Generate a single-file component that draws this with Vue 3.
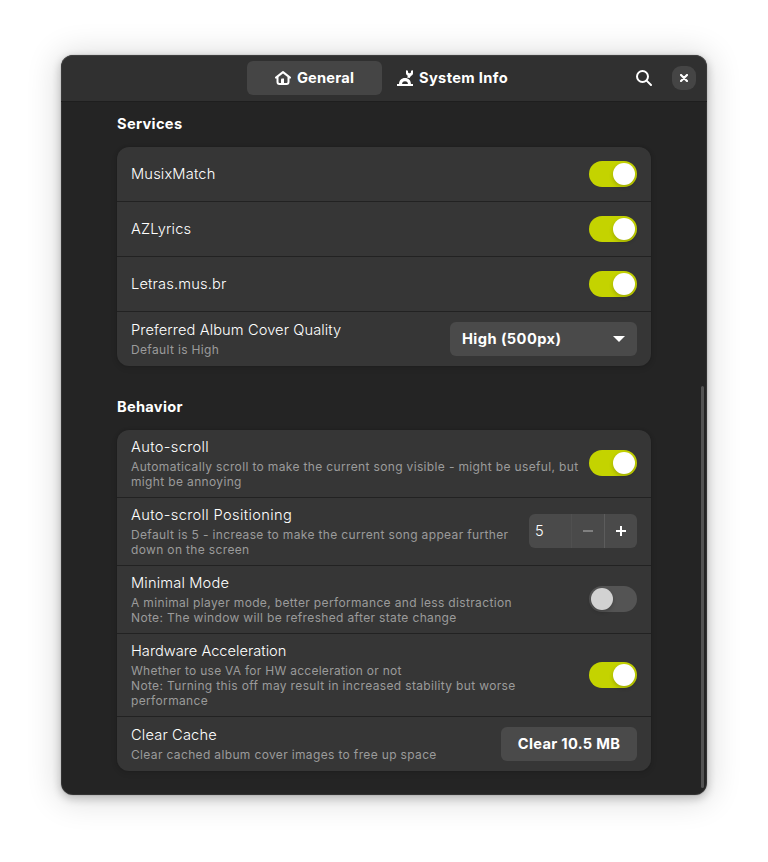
<script setup>
import { ref } from 'vue'

const services = ref([
  { title: 'MusixMatch', on: true },
  { title: 'AZLyrics', on: true },
  { title: 'Letras.mus.br', on: true },
])
const steps = ref(5)
</script>

<template>
  <main class="desktop">
    <div class="window">
      <header class="bar">
        <nav class="tabs">
          <button class="tab active">
            <svg width="16" height="16" viewBox="0 0 16 16" fill="none" stroke="currentColor" stroke-width="2">
              <path d="M1 7.6 L8 2.1 L15 7.6" stroke-linecap="round" stroke-linejoin="round" />
              <path d="M2.5 7 V12 Q2.5 14 4.5 14 H11.5 Q13.5 14 13.5 12 V7" />
              <path d="M6 14 V9.5 Q6 8.5 7 8.5 H9 V14 Z" fill="currentColor" stroke="none" />
            </svg>
            <span>General</span>
          </button>
          <button class="tab">
            <svg width="16" height="16" viewBox="0 0 16 16" fill="currentColor">
              <path d="M0 14 H16 V16 H0 Z" />
              <path d="M2 14.5 C2 10.3 4.4 8 8 8 C11.6 8 14 10.3 14 14.5 H11 C11 12.4 10 11.2 8 11.2 C6 11.2 5 12.4 5 14.5 Z" />
              <path d="M9 0.2 L11 0.8 V2.4 L12 3.2 H13 L14 2.4 V0.8 L16 0.2 V3.2 C16 4.6 15 5.5 13.9 5.9 L12.6 8 L10 7.6 L11 5.8 C9.8 5.3 9 4.4 9 3.2 Z" />
            </svg>
            <span>System Info</span>
          </button>
        </nav>
        <button class="search" aria-label="Search">
          <svg width="16" height="16" viewBox="0 0 16 16" fill="none" stroke="currentColor" stroke-width="2">
            <circle cx="6.5" cy="6.5" r="5.5" />
            <path d="M10.6 10.6 L15 15" stroke-linecap="round" />
          </svg>
        </button>
        <button class="close" aria-label="Close">
          <svg width="8" height="8" viewBox="0 0 8 8" fill="none" stroke="currentColor" stroke-width="2.2">
            <path d="M1 1 L7 7 M7 1 L1 7" stroke-linecap="round" />
          </svg>
        </button>
      </header>

      <div class="content">
        <h2>Services</h2>
        <section class="card">
          <div v-for="s in services" :key="s.title" class="row">
            <div><p class="title">{{ s.title }}</p></div>
            <button class="switch" :class="{ on: s.on }" @click="s.on = !s.on"><i></i></button>
          </div>
          <div class="row">
            <div class="label">
              <p class="title snug">Preferred Album Cover Quality</p>
              <p class="sub">Default is High</p>
            </div>
            <button class="dropdown">
              <span>High (500px)</span>
              <svg width="12" height="6" viewBox="0 0 12 6" fill="currentColor"><path d="M0 0 H12 L6 6 Z" /></svg>
            </button>
          </div>
        </section>

        <h2 class="second">Behavior</h2>
        <section class="card">
          <div class="row two">
            <div>
              <p class="title wide">Auto-scroll</p>
              <p class="sub">Automatically scroll to make the current song visible - might be useful, but<br>might be annoying</p>
            </div>
            <button class="switch on"><i></i></button>
          </div>
          <div class="row two">
            <div>
              <p class="title wide">Auto-scroll Positioning</p>
              <p class="sub">Default is 5 - increase to make the current song appear further<br>down on the screen</p>
            </div>
            <div class="spin">
              <span class="value">{{ steps }}</span>
              <button class="minus" aria-label="Decrease" @click="steps--">
                <svg width="10" height="10" viewBox="0 0 10 10" fill="currentColor"><path d="M0 4 H10 V6 H0 Z" /></svg>
              </button>
              <button class="plus" aria-label="Increase" @click="steps++">
                <svg width="10" height="10" viewBox="0 0 10 10" fill="currentColor"><path d="M0 4 H10 V6 H0 Z M4 0 H6 V10 H4 Z" /></svg>
              </button>
            </div>
          </div>
          <div class="row two">
            <div>
              <p class="title">Minimal Mode</p>
              <p class="sub">A minimal player mode, better performance and less distraction<br>Note: The window will be refreshed after state change</p>
            </div>
            <button class="switch"><i></i></button>
          </div>
          <div class="row three">
            <div class="label">
              <p class="title tight">Hardware Acceleration</p>
              <p class="sub"><span class="dense">Whether to use VA for HW acceleration or not</span><br>Note: Turning this off may result in increased stability but worse<br>performance</p>
            </div>
            <button class="switch on"><i></i></button>
          </div>
          <div class="row">
            <div class="label">
              <p class="title">Clear Cache</p>
              <p class="sub">Clear cached album cover images to free up space</p>
            </div>
            <button class="clear">Clear 10.5 MB</button>
          </div>
        </section>
        <div class="scrollbar"></div>
      </div>
    </div>
  </main>
</template>

<style>
body {
  margin: 0;
  background: #fff;
}
</style>

<style scoped>
* {
  box-sizing: border-box;
}
.desktop {
  height: 862px;
  padding: 55px 61px 67px;
  overflow: hidden;
  font-family: Inter, "Liberation Sans", sans-serif;
  font-size: 14.67px;
  color: #fff;
}
.window {
  height: 740px;
  border-radius: 12px;
  background: #242424;
  box-shadow: 0 3px 9px 1px rgba(0, 0, 0, 0.2), 0 2px 32px 4px rgba(0, 0, 0, 0.14), 0 0 0 1px rgba(0, 0, 0, 0.05), inset 0 0 0 1px rgba(255, 255, 255, 0.07);
}
button {
  display: flex;
  align-items: center;
  margin: 0;
  padding: 0;
  border: 0;
  background: none;
  color: inherit;
  font: inherit;
}
.bar {
  display: grid;
  grid-template-columns: 186px 1fr 36px 35px;
  align-items: center;
  height: 47px;
  border-radius: 12px 12px 0 0;
  background: #303030;
  border-bottom: 1px solid #1e1e1e;
  box-shadow: inset 0 1px 0 rgba(255, 255, 255, 0.07), inset 1px 0 0 rgba(255, 255, 255, 0.05), inset -1px 0 0 rgba(255, 255, 255, 0.05);
}
.tabs {
  grid-column: 2;
  display: flex;
  gap: 3px;
}
.tab {
  width: 135px;
  height: 34px;
  justify-content: center;
  gap: 6px;
  border-radius: 6px;
  font-weight: 700;
  letter-spacing: 0.36px;
}
.tab.active {
  background: #454545;
  letter-spacing: 0.2px;
}
.tab span {
  white-space: nowrap;
}
.search {
  height: 34px;
}
.close {
  width: 24px;
  height: 24px;
  justify-content: center;
  border-radius: 9px;
  background: #454545;
}
.content {
  position: relative;
  height: 693px;
  padding: 12px 56px 0;
}
h2 {
  margin: 0 0 12px;
  height: 21px;
  line-height: 21px;
  font-size: 14.67px;
  font-weight: 700;
  letter-spacing: 0.32px;
}
.second {
  margin-top: 31px;
  letter-spacing: 0.26px;
}
.card {
  border-radius: 12px;
  background: #363636;
  box-shadow: 0 0 0 1px rgba(0, 0, 0, 0.03), 0 1px 3px 1px rgba(0, 0, 0, 0.07), 0 2px 6px 2px rgba(0, 0, 0, 0.03);
}
.row {
  display: flex;
  align-items: center;
  justify-content: space-between;
  height: 55px;
  padding: 0 14px;
  border-bottom: 1px solid #222;
}
.row:last-child {
  height: 54px;
  border-bottom: 0;
}
.two {
  height: 68px;
  padding-bottom: 1px;
}
.three {
  height: 83px;
}
.label {
  margin-bottom: 1px;
}
p {
  margin: 0;
  white-space: nowrap;
}
.title {
  line-height: 20px;
  font-weight: 350;
  letter-spacing: 0.15px;
}
.title.wide {
  letter-spacing: 0.34px;
}
.title.snug {
  letter-spacing: 0.09px;
}
.title.tight {
  letter-spacing: 0;
}
.sub {
  margin-top: 2px;
  font-size: 12px;
  line-height: 15px;
  letter-spacing: 0.35px;
  color: #9b9b9b;
}
.dense {
  letter-spacing: 0.27px;
}
.switch {
  flex: none;
  width: 48px;
  height: 26px;
  padding: 2px;
  border-radius: 13px;
  background: #545454;
}
.switch i {
  width: 22px;
  height: 22px;
  border-radius: 50%;
  background: #d2d2d2;
  box-shadow: 0 2px 4px rgba(0, 0, 0, 0.2);
}
.switch.on {
  justify-content: flex-end;
  background: #c4d300;
}
.switch.on i {
  background: #fff;
}
.dropdown {
  width: 187px;
  height: 34px;
  justify-content: space-between;
  padding: 0 12px;
  border-radius: 6px;
  background: #4a4a4a;
  font-weight: 700;
  letter-spacing: 0.42px;
}
.spin {
  display: flex;
  width: 108px;
  height: 34px;
  border-radius: 6px;
  background: #4a4a4a;
  line-height: 34px;
}
.value {
  width: 42px;
  padding-left: 6px;
  font-weight: 350;
}
.minus,
.plus {
  width: 33px;
  justify-content: center;
  border-left: 1px solid #505050;
}
.minus {
  color: #808080;
}
.plus {
  border-left-color: #5c5c5c;
}
.clear {
  width: 136px;
  height: 34px;
  justify-content: center;
  border-radius: 6px;
  background: #4a4a4a;
  font-weight: 700;
  letter-spacing: 0.3px;
}
.scrollbar {
  position: absolute;
  top: 284px;
  right: 3px;
  width: 3px;
  height: 402px;
  border-radius: 2px;
  background: #535353;
}
</style>
